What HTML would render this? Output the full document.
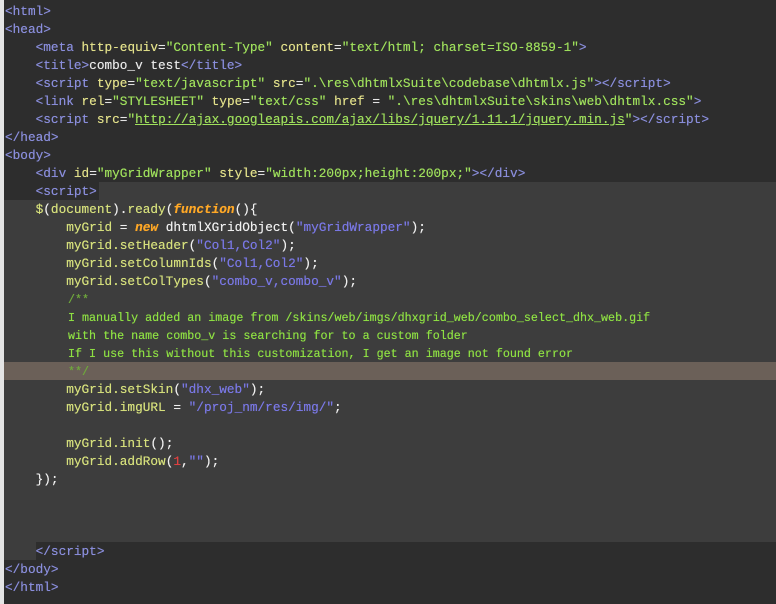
<!DOCTYPE html>
<html><head><meta charset="utf-8"><style>
body{margin:0;width:776px;height:604px;background:#2d2d2d;overflow:hidden;position:relative;font-family:"Liberation Mono",monospace;font-size:12.75px}
.g{position:absolute;left:0;top:0;width:4px;height:604px;background:#e4e4e4}
.l{position:absolute;left:5px;height:18px;line-height:18px;white-space:pre;color:#e8e8e8;margin-top:1px;text-shadow:0 0 0.4px currentColor}
.t{color:#8a8edc}.a{color:#e2e08a}.s{color:#9fe05c}.i{color:#d6e07c}.p{color:#f0f0f0}.js{color:#7a78e6}.k{color:#ffa826;font-style:italic;font-weight:bold}
.c{font-size:11.7px;color:#8ee043}.cd{font-size:11.7px;color:#6fa83c}.n{color:#e04040}
.u{text-decoration:underline}
.bg{position:absolute;background:#3d3d3d}
</style></head><body>
<div class="bg" style="left:99px;top:182px;width:677px;height:18px"></div>
<div class="bg" style="left:4px;top:200px;width:772px;height:342px"></div>
<div class="bg" style="left:4px;top:542px;width:32px;height:18px"></div>
<div class="bg" style="left:4px;top:362px;width:772px;height:18px;background:#6b6058"></div>
<div class="g"></div>
<div class="l" style="top:2px"><span class="t">&lt;html&gt;</span></div>
<div class="l" style="top:20px"><span class="t">&lt;head&gt;</span></div>
<div class="l" style="top:38px">    <span class="t">&lt;meta</span> <span class="a">http-equiv</span>=<span class="s">"Content-Type"</span> <span class="a">content</span>=<span class="s">"text/html; charset=ISO-8859-1"</span><span class="t">&gt;</span></div>
<div class="l" style="top:56px">    <span class="t">&lt;title&gt;</span>combo_v test<span class="t">&lt;/title&gt;</span></div>
<div class="l" style="top:74px">    <span class="t">&lt;script</span> <span class="a">type</span>=<span class="s">"text/javascript"</span> <span class="a">src</span>=<span class="s">".\res\dhtmlxSuite\codebase\dhtmlx.js"</span><span class="t">&gt;&lt;/script&gt;</span></div>
<div class="l" style="top:92px">    <span class="t">&lt;link</span> <span class="a">rel</span>=<span class="s">"STYLESHEET"</span> <span class="a">type</span>=<span class="s">"text/css"</span> <span class="a">href</span> = <span class="s">".\res\dhtmlxSuite\skins\web\dhtmlx.css"</span><span class="t">&gt;</span></div>
<div class="l" style="top:110px">    <span class="t">&lt;script</span> <span class="a">src</span>=<span class="s">"<span class="u">http://ajax.googleapis.com/ajax/libs/jquery/1.11.1/jquery.min.js</span>"</span><span class="t">&gt;&lt;/script&gt;</span></div>
<div class="l" style="top:128px"><span class="t">&lt;/head&gt;</span></div>
<div class="l" style="top:146px"><span class="t">&lt;body&gt;</span></div>
<div class="l" style="top:164px">    <span class="t">&lt;div</span> <span class="a">id</span>=<span class="s">"myGridWrapper"</span> <span class="a">style</span>=<span class="s">"width:200px;height:200px;"</span><span class="t">&gt;&lt;/div&gt;</span></div>
<div class="l" style="top:182px">    <span class="t">&lt;script&gt;</span></div>
<div class="l" style="top:200px">    <span class="i">$</span><span class="p">(</span><span class="i">document</span><span class="p">).</span><span class="i">ready</span><span class="p">(</span><span class="k">function</span><span class="p">(){</span></div>
<div class="l" style="top:218px">        <span class="i">myGrid</span> <span class="p">=</span> <span class="k">new</span> <span class="p">dhtmlXGridObject</span><span class="p">(</span><span class="js">"myGridWrapper"</span><span class="p">);</span></div>
<div class="l" style="top:236px">        <span class="i">myGrid.setHeader</span><span class="p">(</span><span class="js">"Col1,Col2"</span><span class="p">);</span></div>
<div class="l" style="top:254px">        <span class="i">myGrid.setColumnIds</span><span class="p">(</span><span class="js">"Col1,Col2"</span><span class="p">);</span></div>
<div class="l" style="top:272px">        <span class="i">myGrid.setColTypes</span><span class="p">(</span><span class="js">"combo_v,combo_v"</span><span class="p">);</span></div>
<div class="l" style="top:290px;left:68px"><span class="cd">/**</span></div>
<div class="l" style="top:308px;left:68px"><span class="c">I manually added an image from /skins/web/imgs/dhxgrid_web/combo_select_dhx_web.gif</span></div>
<div class="l" style="top:326px;left:68px"><span class="c">with the name combo_v is searching for to a custom folder</span></div>
<div class="l" style="top:344px;left:68px"><span class="c">If I use this without this customization, I get an image not found error</span></div>
<div class="l" style="top:362px;left:68px"><span class="cd">**/</span></div>
<div class="l" style="top:380px">        <span class="i">myGrid.setSkin</span><span class="p">(</span><span class="js">"dhx_web"</span><span class="p">);</span></div>
<div class="l" style="top:398px">        <span class="i">myGrid.imgURL</span> <span class="p">=</span> <span class="js">"/proj_nm/res/img/"</span><span class="p">;</span></div>
<div class="l" style="top:434px">        <span class="i">myGrid.init</span><span class="p">();</span></div>
<div class="l" style="top:452px">        <span class="i">myGrid.addRow</span><span class="p">(</span><span class="n">1</span><span class="p">,</span><span class="js">""</span><span class="p">);</span></div>
<div class="l" style="top:470px">    <span class="p">});</span></div>
<div class="l" style="top:542px">    <span class="t">&lt;/script&gt;</span></div>
<div class="l" style="top:560px"><span class="t">&lt;/body&gt;</span></div>
<div class="l" style="top:578px"><span class="t">&lt;/html&gt;</span></div>
</body></html>
